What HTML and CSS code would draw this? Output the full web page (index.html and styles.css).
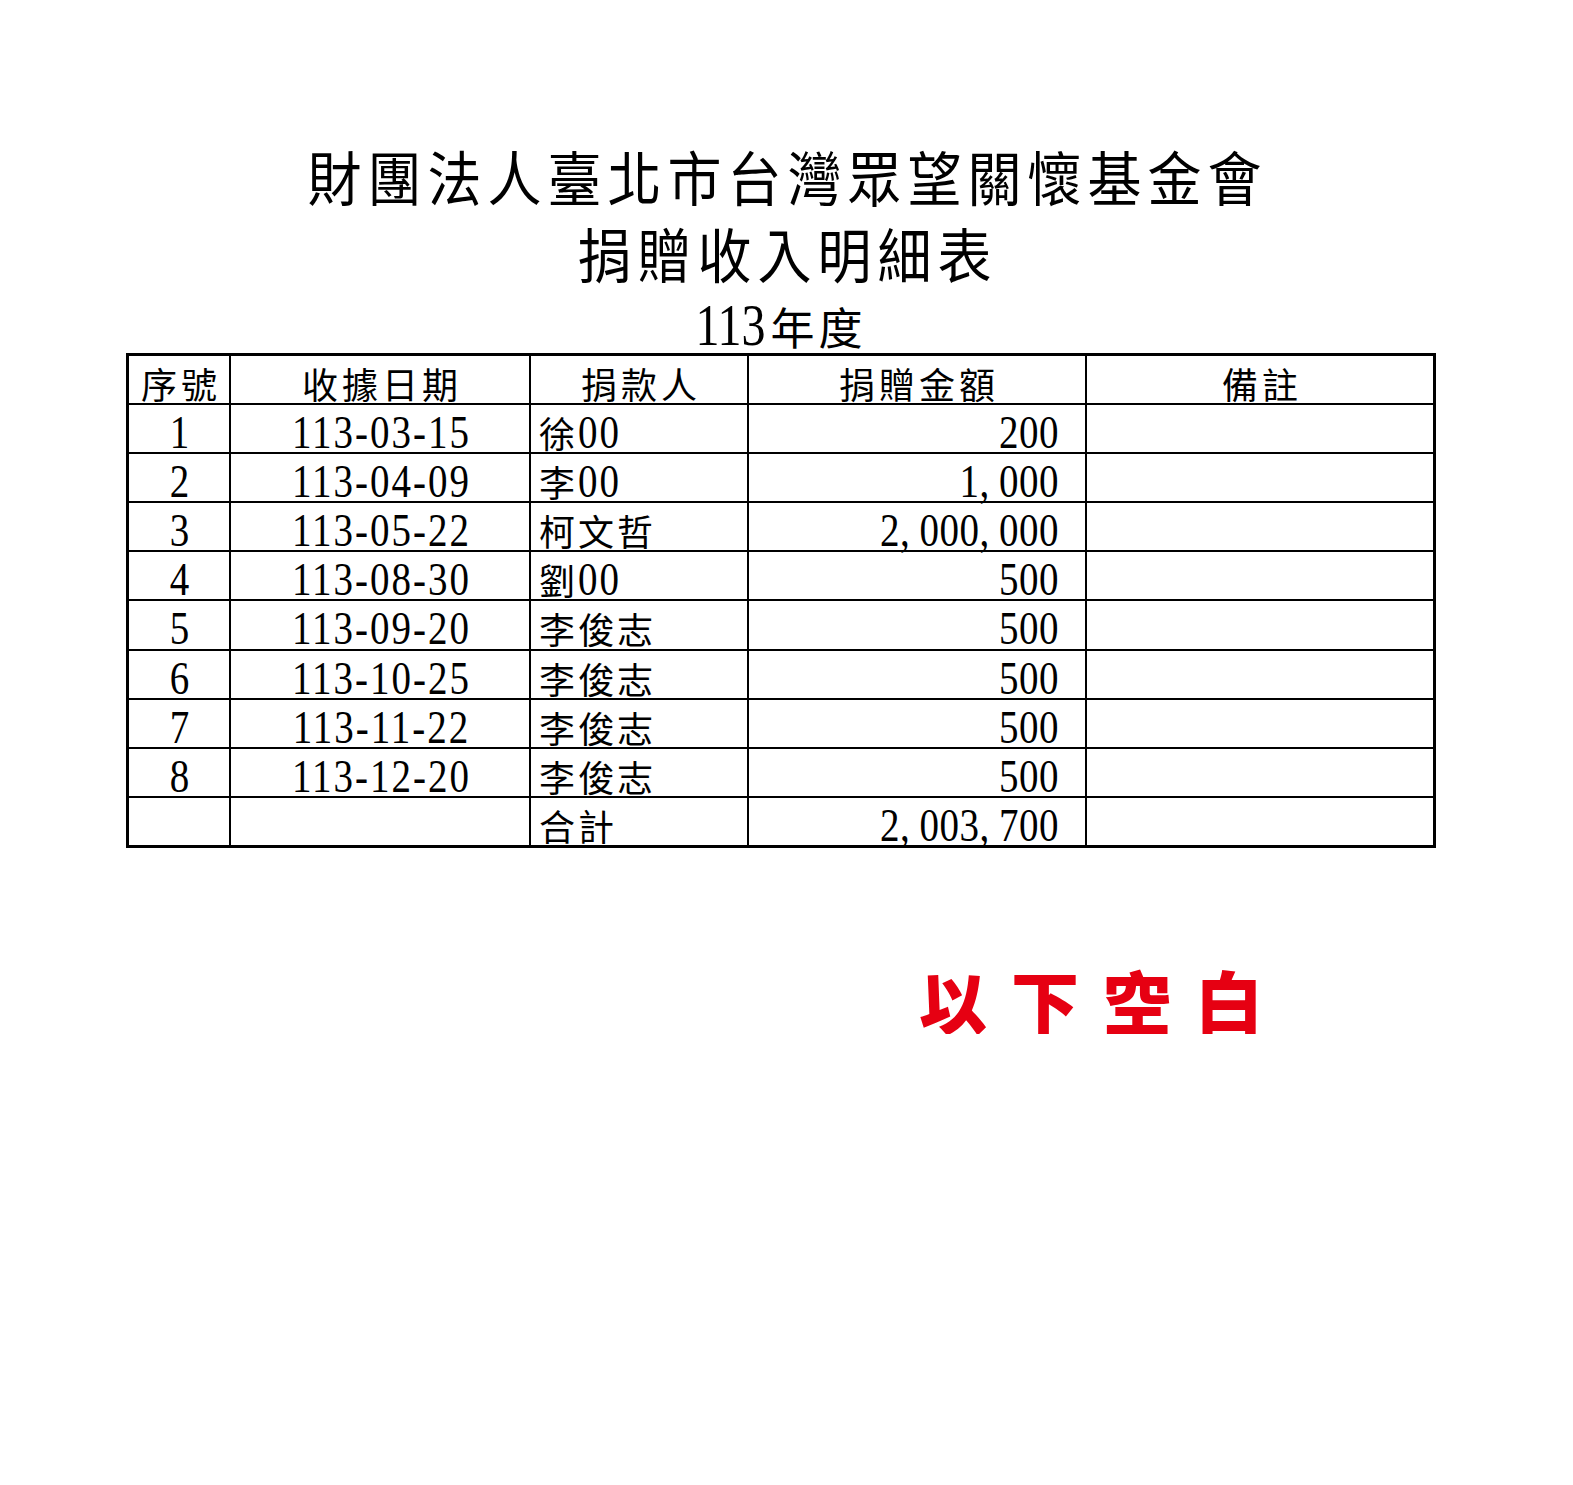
FILE: index.html
```html
<!DOCTYPE html>
<html lang="zh-Hant">
<head>
<meta charset="utf-8">
<title>捐贈收入明細表</title>
<link rel="stylesheet" href="styles.css">
</head>
<body>
<div class="page">
  <h1 class="title t1">財團法人臺北市台灣眾望關懷基金會</h1>
  <h2 class="title t2">捐贈收入明細表</h2>
  <div class="year"><span class="yn">113</span><span class="yc">年度</span></div>
  <div class="grid">
    <div class="cell c hd">序號</div>
    <div class="cell c hd">收據日期</div>
    <div class="cell c hd">捐款人</div>
    <div class="cell c hd">捐贈金額</div>
    <div class="cell c hd last">備註</div>

    <div class="cell c"><span class="n">1</span></div>
    <div class="cell c"><span class="n">113-03-15</span></div>
    <div class="cell l">徐<span class="n">00</span></div>
    <div class="cell r"><span class="n">200</span></div>
    <div class="cell last"></div>

    <div class="cell c"><span class="n">2</span></div>
    <div class="cell c"><span class="n">113-04-09</span></div>
    <div class="cell l">李<span class="n">00</span></div>
    <div class="cell r"><span class="n">1<span class="cm">,</span>000</span></div>
    <div class="cell last"></div>

    <div class="cell c"><span class="n">3</span></div>
    <div class="cell c"><span class="n">113-05-22</span></div>
    <div class="cell l">柯文哲</div>
    <div class="cell r"><span class="n">2<span class="cm">,</span>000<span class="cm">,</span>000</span></div>
    <div class="cell last"></div>

    <div class="cell c"><span class="n">4</span></div>
    <div class="cell c"><span class="n">113-08-30</span></div>
    <div class="cell l">劉<span class="n">00</span></div>
    <div class="cell r"><span class="n">500</span></div>
    <div class="cell last"></div>

    <div class="cell c"><span class="n">5</span></div>
    <div class="cell c"><span class="n">113-09-20</span></div>
    <div class="cell l">李俊志</div>
    <div class="cell r"><span class="n">500</span></div>
    <div class="cell last"></div>

    <div class="cell c"><span class="n">6</span></div>
    <div class="cell c"><span class="n">113-10-25</span></div>
    <div class="cell l">李俊志</div>
    <div class="cell r"><span class="n">500</span></div>
    <div class="cell last"></div>

    <div class="cell c"><span class="n">7</span></div>
    <div class="cell c"><span class="n">113-11-22</span></div>
    <div class="cell l">李俊志</div>
    <div class="cell r"><span class="n">500</span></div>
    <div class="cell last"></div>

    <div class="cell c"><span class="n">8</span></div>
    <div class="cell c"><span class="n">113-12-20</span></div>
    <div class="cell l">李俊志</div>
    <div class="cell r"><span class="n">500</span></div>
    <div class="cell last"></div>

    <div class="cell bottom"></div>
    <div class="cell bottom"></div>
    <div class="cell l bottom">合計</div>
    <div class="cell r bottom"><span class="n">2<span class="cm">,</span>003<span class="cm">,</span>700</span></div>
    <div class="cell last bottom"></div>
  </div>
  <div class="blank">以下空白</div>
</div>
</body>
</html>
```

FILE: styles.css
```css
body {
  margin: 0;
  background: #fff;
  color: #000;
  font-family: "Noto Sans CJK TC", "Noto Sans CJK JP", sans-serif;
}

.page {
  padding-top: 149px;
  margin-left: 126px;
  width: 1310px;
}

.title {
  margin: 0;
  font-weight: 400;
  font-size: 54px;
  line-height: 54px;
  height: 54px;
  letter-spacing: 6px;
  text-align: center;
  padding-left: 13px;
  white-space: nowrap;
  transform: scaleY(1.1);
}

.t1 { margin-bottom: 23px; }
.t2 { margin-bottom: 24px; }

.year {
  height: 44px;
  font-size: 44px;
  line-height: 44px;
  text-align: center;
  margin-bottom: 5px;
  white-space: nowrap;
}

.yn {
  display: inline-block;
  font-family: "Liberation Serif", serif;
  font-size: 48px;
  line-height: 40px;
  transform: scaleY(1.23);
  transform-origin: 50% 36.2px;
}

.yc {
  margin-left: 5px;
  letter-spacing: 4px;
}

.grid {
  display: grid;
  grid-template-columns: 102px 300px 218px 338px 349px;
  grid-template-rows: 49px 49px 49px 49px 49px 50px 49px 49px 49px 50px;
  border-top: 3px solid #000;
  border-left: 3px solid #000;
}

.cell {
  box-sizing: border-box;
  border-right: 2px solid #000;
  border-bottom: 2px solid #000;
  padding-top: 8px;
  font-size: 36px;
  line-height: 39px;
  letter-spacing: 3px;
  white-space: nowrap;
}

.cell.last { border-right-width: 3px; }
.cell.bottom { border-bottom-width: 3px; }

.c { text-align: center; }
.l { text-align: left; padding-left: 8px; }
.r { text-align: right; padding-right: 26px; }

.hd { letter-spacing: 4px; }
.c.hd { padding-left: 4px; }

.n {
  display: inline-block;
  font-family: "Liberation Serif", serif;
  font-size: 39px;
  line-height: 39px;
  letter-spacing: 2px;
  transform: scaleY(1.18);
  transform-origin: 50% 32.66px;
}

.c .n { padding-left: 3px; }
.r .n { letter-spacing: 0.5px; }

.cm { letter-spacing: 0.25em; }

.blank {
  margin-top: 118px;
  padding-left: 793px;
  font-size: 68px;
  line-height: 68px;
  font-weight: 900;
  color: #e60012;
  letter-spacing: 24px;
  white-space: nowrap;
}
```
